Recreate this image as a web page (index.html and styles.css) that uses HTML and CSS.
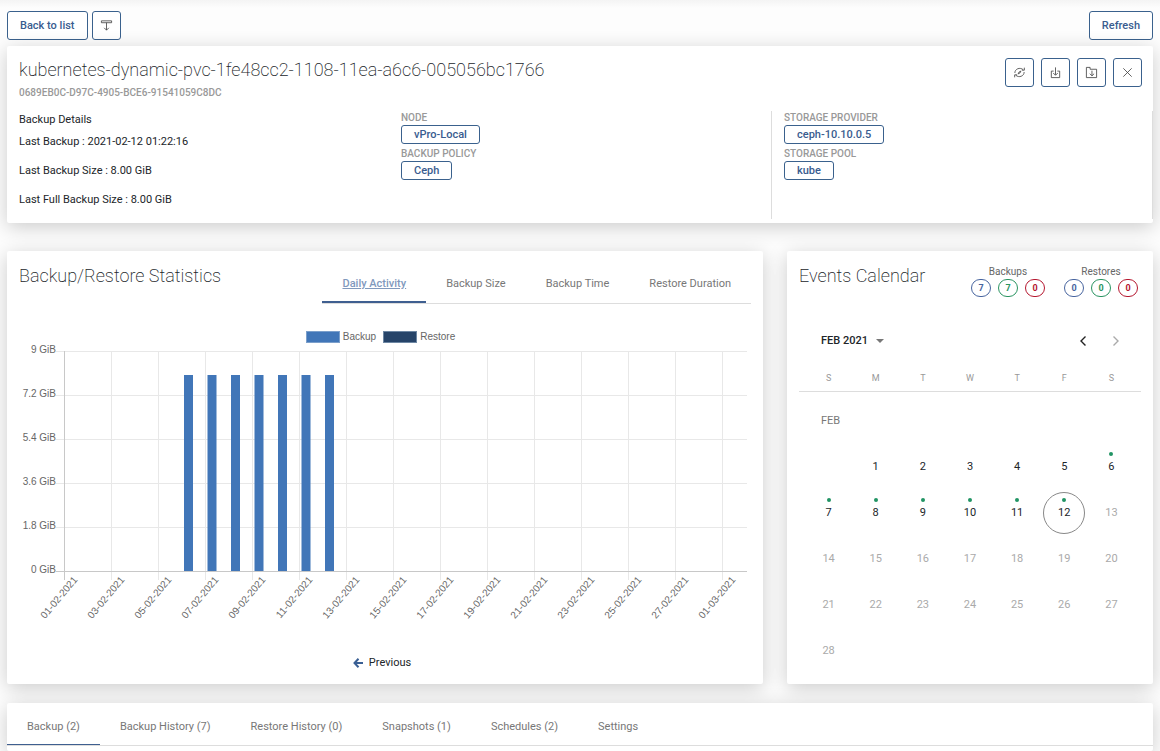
FILE: index.html
```html
<!DOCTYPE html>
<html lang="en">
<head>
<meta charset="utf-8">
<meta name="viewport" content="width=device-width, initial-scale=1">
<title>kubernetes-dynamic-pvc</title>
<link rel="stylesheet" href="styles.css">
</head>
<body>
<header class="toolbar">
  <button class="btn" type="button">Back to list</button>
  <button class="btn btn-icon" type="button" aria-label="Expand">
    <svg class="icon" viewBox="0 0 14 14"><path d="M1.500 2h11v2h-11zM7 4v8M4.500 9.500L7 12l2.500-2.500"/></svg>
  </button>
  <button class="btn toolbar-end" type="button">Refresh</button>
</header>

<main class="content">
  <section class="card summary">
    <div class="summary-head">
      <div>
        <h1 class="title">kubernetes-dynamic-pvc-1fe48cc2-1108-11ea-a6c6-005056bc1766</h1>
        <p class="uuid">0689EB0C-D97C-4905-BCE6-91541059C8DC</p>
      </div>
      <div class="actions">
        <button class="btn btn-icon" type="button" aria-label="Sync">
          <svg class="icon" viewBox="0 0 14 14"><path d="M2 7.500C2 3 7.500 1 11 4M12.200 1.800v2.700H9.500M12 6.500c0 4.500-5.500 6.500-9 3.500M1.800 12.200V9.500h2.700M5.500 8.500l1-2 2-1-1 2z"/></svg>
        </button>
        <button class="btn btn-icon" type="button" aria-label="Backup">
          <svg class="icon" viewBox="0 0 14 14"><path d="M5 5.500H2.500v7h9v-7H9M7 1.500v8M4.500 7.500L7 10l2.500-2.500"/></svg>
        </button>
        <button class="btn btn-icon" type="button" aria-label="Restore">
          <svg class="icon" viewBox="0 0 14 14"><path d="M1.500 12.500v-11h4v2h7v9zM7.500 5v5.500M5.200 8.300l2.300 2.300 2.300-2.300"/></svg>
        </button>
        <button class="btn btn-icon" type="button" aria-label="Close">
          <svg class="icon" viewBox="0 0 14 14"><path d="M2.500 2.500l9 9M11.500 2.500l-9 9"/></svg>
        </button>
      </div>
    </div>
    <div class="summary-cols">
      <div class="col details">
        <p>Backup Details</p>
        <p>Last Backup : 2021-02-12 01:22:16</p>
        <p>Last Backup Size : 8.00 GiB</p>
        <p>Last Full Backup Size : 8.00 GiB</p>
      </div>
      <dl class="col props">
        <dt>NODE</dt>
        <dd><a class="tag" href="#">vPro-Local</a></dd>
        <dt>BACKUP POLICY</dt>
        <dd><a class="tag" href="#">Ceph</a></dd>
      </dl>
      <dl class="col props ruled">
        <dt>STORAGE PROVIDER</dt>
        <dd><a class="tag" href="#">ceph-10.10.0.5</a></dd>
        <dt>STORAGE POOL</dt>
        <dd><a class="tag" href="#">kube</a></dd>
      </dl>
    </div>
  </section>

  <div class="panels">
    <section class="card stats">
      <div class="panel-head">
        <h2 class="title">Backup/Restore Statistics</h2>
        <nav class="tabs stats-tabs">
          <a class="tab active" href="#">Daily Activity</a>
          <a class="tab" href="#">Backup Size</a>
          <a class="tab" href="#">Backup Time</a>
          <a class="tab" href="#">Restore Duration</a>
        </nav>
      </div>
      <div class="legend">
        <span class="swatch swatch-backup"></span><span>Backup</span>
        <span class="swatch swatch-restore"></span><span>Restore</span>
      </div>
      <svg class="chart" viewBox="0 0 732 280" role="img" aria-label="Daily backup activity">
        <path class="grid" d="M37 6.500H728M37 50.500H728M37 94.500H728M37 138.500H728M37 182.500H728M92.500 6V235M139.500 6V235M186.500 6V235M233.500 6V235M280.500 6V235M327.500 6V235M374.500 6V235M421.500 6V235M468.500 6V235M515.500 6V235M562.500 6V235M609.500 6V235M656.500 6V235M703.500 6V235"/>
        <path class="axis" d="M45.500 6V235M37 226.500H728"/>
        <path class="bars" d="M165 30h9v196h-9zM188.500 30h9v196h-9zM212 30h9v196h-9zM235.500 30h9v196h-9zM259 30h9v196h-9zM282.500 30h9v196h-9zM306 30h9v196h-9z"/>
        <g class="ylabels">
          <text x="37" y="8">9 GiB</text><text x="37" y="52">7.2 GiB</text><text x="37" y="96">5.4 GiB</text><text x="37" y="140">3.6 GiB</text><text x="37" y="184">1.8 GiB</text><text x="37" y="228">0 GiB</text>
        </g>
        <g class="xlabels">
          <text transform="translate(59 235) rotate(-50)">01-02-2021</text>
          <text transform="translate(106 235) rotate(-50)">03-02-2021</text>
          <text transform="translate(153 235) rotate(-50)">05-02-2021</text>
          <text transform="translate(200 235) rotate(-50)">07-02-2021</text>
          <text transform="translate(247 235) rotate(-50)">09-02-2021</text>
          <text transform="translate(294 235) rotate(-50)">11-02-2021</text>
          <text transform="translate(341 235) rotate(-50)">13-02-2021</text>
          <text transform="translate(388 235) rotate(-50)">15-02-2021</text>
          <text transform="translate(435 235) rotate(-50)">17-02-2021</text>
          <text transform="translate(482 235) rotate(-50)">19-02-2021</text>
          <text transform="translate(529 235) rotate(-50)">21-02-2021</text>
          <text transform="translate(576 235) rotate(-50)">23-02-2021</text>
          <text transform="translate(623 235) rotate(-50)">25-02-2021</text>
          <text transform="translate(670 235) rotate(-50)">27-02-2021</text>
          <text transform="translate(717 235) rotate(-50)">01-03-2021</text>
        </g>
      </svg>
      <button class="previous" type="button">
        <svg class="arrow" viewBox="0 0 10 10"><path d="M5.500 0.800L1.500 5l4 4.200M2 5h8"/></svg>Previous
      </button>
    </section>

    <section class="card events">
      <div class="panel-head events-head">
        <h2 class="title">Events Calendar</h2>
        <div class="counts">
          <div class="count-group">
            <span>Backups</span>
            <div class="pills"><span class="pill blue">7</span><span class="pill green">7</span><span class="pill red">0</span></div>
          </div>
          <div class="count-group">
            <span>Restores</span>
            <div class="pills"><span class="pill blue">0</span><span class="pill green">0</span><span class="pill red">0</span></div>
          </div>
        </div>
      </div>
      <div class="cal-nav">
        <button class="period" type="button">FEB 2021<span class="caret"></span></button>
        <button class="cal-arrow" type="button" aria-label="Previous month"><svg viewBox="0 0 12 12"><path d="M8.500 1.500L4 6l4.500 4.500"/></svg></button>
        <button class="cal-arrow" type="button" aria-label="Next month" disabled><svg viewBox="0 0 12 12"><path d="M3.500 1.500L8 6l-4.500 4.500"/></svg></button>
      </div>
      <table class="calendar">
        <thead><tr><th>S</th><th>M</th><th>T</th><th>W</th><th>T</th><th>F</th><th>S</th></tr></thead>
        <tbody>
          <tr class="month"><td colspan="7">FEB</td></tr>
          <tr><td></td><td><button class="day">1</button></td><td><button class="day">2</button></td><td><button class="day">3</button></td><td><button class="day">4</button></td><td><button class="day">5</button></td><td><button class="day event">6</button></td></tr>
          <tr><td><button class="day event">7</button></td><td><button class="day event">8</button></td><td><button class="day event">9</button></td><td><button class="day event">10</button></td><td><button class="day event">11</button></td><td><button class="day event today">12</button></td><td><button class="day" disabled>13</button></td></tr>
          <tr><td><button class="day" disabled>14</button></td><td><button class="day" disabled>15</button></td><td><button class="day" disabled>16</button></td><td><button class="day" disabled>17</button></td><td><button class="day" disabled>18</button></td><td><button class="day" disabled>19</button></td><td><button class="day" disabled>20</button></td></tr>
          <tr><td><button class="day" disabled>21</button></td><td><button class="day" disabled>22</button></td><td><button class="day" disabled>23</button></td><td><button class="day" disabled>24</button></td><td><button class="day" disabled>25</button></td><td><button class="day" disabled>26</button></td><td><button class="day" disabled>27</button></td></tr>
          <tr><td><button class="day" disabled>28</button></td><td></td><td></td><td></td><td></td><td></td><td></td></tr>
        </tbody>
      </table>
    </section>
  </div>

  <section class="card lists">
    <nav class="tabs list-tabs">
      <a class="tab active" href="#">Backup (2)</a>
      <a class="tab" href="#">Backup History (7)</a>
      <a class="tab" href="#">Restore History (0)</a>
      <a class="tab" href="#">Snapshots (1)</a>
      <a class="tab" href="#">Schedules (2)</a>
      <a class="tab" href="#">Settings</a>
    </nav>
  </section>
</main>
</body>
</html>
```
FILE: styles.css
```css
* { box-sizing: border-box; }

body {
  margin: 0;
  min-height: 100vh;
  display: flex;
  flex-direction: column;
  background: linear-gradient(#f4f4f4, #fdfdfd 8px);
  color: #212529;
  font: 11px/16px Roboto, "Liberation Sans", sans-serif;
}

h1, h2, p, dl, dd { margin: 0; }
button { font: inherit; color: inherit; cursor: pointer; }
a { text-decoration: none; }

.toolbar {
  display: flex;
  gap: 4px;
  padding: 11px 7px 6px;
}
.toolbar-end { margin-left: auto; }

.btn {
  height: 29px;
  padding: 0 12px;
  border: 1px solid #3a618d;
  border-radius: 3px;
  background: #fff;
  color: #395c8f;
  font-weight: 500;
  white-space: nowrap;
}
.btn-icon {
  display: flex;
  align-items: center;
  justify-content: center;
  width: 29px;
  padding: 0;
}
.icon {
  width: 13px;
  height: 13px;
  fill: none;
  stroke: #444;
  stroke-width: 0.9;
}

.content {
  flex: 1;
  display: flex;
  flex-direction: column;
  padding: 0 7px;
}
.card {
  background: #fff;
  border-radius: 2px;
  box-shadow: 0 4px 20px rgba(0, 0, 0, 0.2);
}
.title {
  font-size: 18px;
  line-height: 24px;
  font-weight: 200;
}

.summary { padding: 12px 0 4px; }
.summary-head {
  display: flex;
  justify-content: space-between;
  padding: 0 11px 0 12px;
  margin-bottom: 12px;
}
.uuid {
  margin-top: 4px;
  color: #999;
  font-size: 10px;
  line-height: 13px;
  font-weight: 500;
}
.actions { display: flex; gap: 7px; }
.summary-cols {
  display: grid;
  grid-template-columns: repeat(3, 1fr);
  min-height: 108px;
}
.col { padding: 0 12px; }
.details { padding-top: 1px; }
.details p + p { margin-top: 13px; }
.details p:nth-child(2) { margin-top: 6px; }
.ruled {
  border: solid #ddd;
  border-width: 0 1px;
}
.props dt {
  padding-bottom: 1px;
  color: #999;
  font-size: 10px;
  line-height: 13px;
  font-weight: 500;
}
.props dd { display: flex; margin-bottom: 3px; }
.tag {
  padding: 0 12px;
  border: 1px solid #3a618d;
  border-radius: 3px;
  color: #395c8f;
  line-height: 17px;
  font-weight: 500;
}

.panels {
  display: grid;
  grid-template-columns: 2fr 1fr;
  margin: 28px -12px 19px;
}
.panels .card { margin: 0 12px; padding: 13px 12px 10px; }
.panel-head {
  display: flex;
  justify-content: space-between;
}

.tabs {
  display: flex;
  border-bottom: 1px solid #ddd;
}
.tab {
  padding: 0 20px;
  color: #777;
  border-bottom: 2px solid transparent;
  white-space: nowrap;
}
.stats-tabs .tab { height: 39px; line-height: 39px; }
.stats-tabs .active {
  color: #8199bd;
  font-weight: 500;
  text-decoration: underline;
  border-color: #3f5f90;
}

.stats {
  display: flex;
  flex-direction: column;
}
.legend {
  display: flex;
  align-items: center;
  justify-content: center;
  gap: 3px;
  margin: 27px 9px 2px 0;
  color: #666;
  font: 10px/12px "Liberation Sans", Arial, sans-serif;
}
.swatch {
  width: 34px;
  height: 12px;
  border: 1px solid #7b9fcb;
  background: #4176b8;
}
.swatch-restore {
  margin-left: 4px;
  border-color: #6d87a3;
  background: #264469;
}
.chart {
  width: 100%;
  font: 10px "Liberation Sans", Arial, sans-serif;
}
.grid { stroke: #e8e8e8; fill: none; }
.axis { stroke: #c8c8c8; fill: none; }
.bars { fill: #4176b8; }
.ylabels, .xlabels { fill: #666; text-anchor: end; }
.previous {
  display: flex;
  align-items: center;
  gap: 6px;
  margin: 30px auto 0;
  padding: 0 6px 0 0;
  border: 0;
  background: none;
}
.arrow {
  width: 10px;
  height: 10px;
  fill: none;
  stroke: #3a5f94;
  stroke-width: 2;
}

.counts {
  display: flex;
  gap: 19px;
  padding-right: 3px;
}
.count-group {
  color: #666;
  font-size: 10px;
  line-height: 15px;
  text-align: center;
}
.pills { display: flex; gap: 7px; }
.pill {
  width: 20px;
  height: 18px;
  border: 1px solid;
  border-radius: 9px;
  font-size: 9px;
  line-height: 17px;
  font-weight: 700;
}
.blue { color: #48659f; }
.green { color: #2a9461; }
.red { color: #b5172f; }

.cal-nav {
  display: flex;
  align-items: center;
  margin-top: 36px;
  padding: 0 13px 0 22px;
}
.period {
  display: flex;
  align-items: center;
  gap: 8px;
  margin-right: auto;
  padding: 0;
  border: 0;
  background: none;
  font-weight: 500;
}
.caret {
  border: 4px solid transparent;
  border-top-color: #777;
  border-bottom: 0;
}
.cal-arrow {
  width: 24px;
  height: 16px;
  margin-left: 9px;
  padding: 0;
  border: 0;
  background: none;
  color: #222;
}
.cal-arrow:disabled { color: #aaa; }
.cal-arrow svg {
  display: block;
  width: 12px;
  height: 12px;
  margin: auto;
  fill: none;
  stroke: currentColor;
  stroke-width: 1.4;
}
.calendar {
  width: 100%;
  margin-top: 21px;
  padding: 0 6px;
  border-collapse: separate;
  border-spacing: 0;
  table-layout: fixed;
}
.calendar thead tr { position: relative; }
.calendar th:first-child::after {
  content: "";
  position: absolute;
  right: -6px;
  bottom: 0;
  left: -6px;
  height: 1px;
  background: #ddd;
}
.calendar th {
  height: 22px;
  padding: 0;
  color: #999;
  font-size: 9px;
  line-height: 16px;
  font-weight: 400;
  vertical-align: top;
}
.calendar td { height: 46px; padding: 0; }
.calendar .month td {
  height: 52px;
  padding: 5px 16px 0;
  color: #777;
}
.day {
  position: relative;
  display: block;
  width: 42px;
  height: 42px;
  margin: 0 auto;
  padding: 0;
  border: 1px solid transparent;
  border-radius: 50%;
  background: none;
}
.day:disabled { color: #aaa; }
.today { border-color: #888; }
.event::before {
  content: "";
  position: absolute;
  top: 5px;
  left: 50%;
  width: 4px;
  height: 4px;
  margin-left: -2px;
  border-radius: 50%;
  background: #219464;
}

.lists { flex: 1; }
.list-tabs .tab {
  height: 42px;
  line-height: 47px;
  border-bottom-width: 1px;
}
.list-tabs .active { border-color: #3f5f90; }
```
